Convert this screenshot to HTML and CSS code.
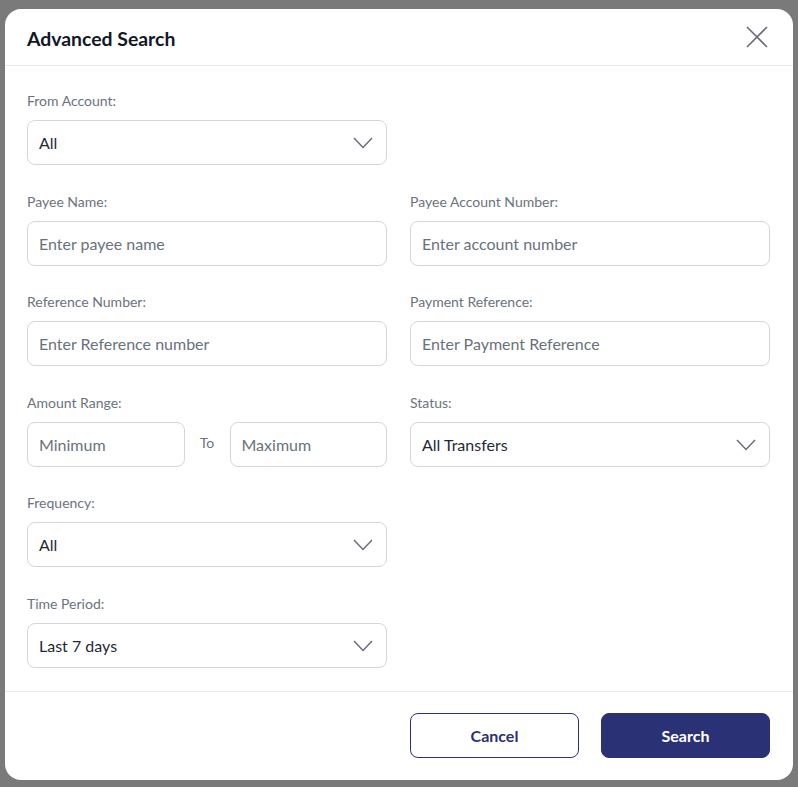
FILE: index.html
```html
<!DOCTYPE html>
<html lang="en">
<head>
    <meta charset="UTF-8">
    <meta name="viewport" content="width=device-width, initial-scale=1.0">
    <title>Advanced Search</title>
    <link rel="stylesheet" href="styles.css">
</head>
<body>
    <div class="backdrop">
        <div class="modal">
            <header class="modal-header">
                <h2>Advanced Search</h2>
                <button class="close-btn" type="button" aria-label="Close">
                    <svg width="22" height="22" viewBox="0 0 22 22">
                        <path d="M1 1 L21 21 M21 1 L1 21" stroke="#6b6b7e" stroke-width="1.6" fill="none"/>
                    </svg>
                </button>
            </header>

            <form class="modal-body">
                <div class="field">
                    <label>From Account:</label>
                    <div class="select-wrap">
                        <select class="control"><option>All</option></select>
                        <svg class="chevron" width="20" height="12" viewBox="0 0 20 12"><path d="M1 1 L10 10.5 L19 1" stroke="#6b6b7e" stroke-width="1.5" fill="none"/></svg>
                    </div>
                </div>
                <div class="field"></div>

                <div class="field">
                    <label>Payee Name:</label>
                    <input class="control" type="text" placeholder="Enter payee name">
                </div>
                <div class="field">
                    <label>Payee Account Number:</label>
                    <input class="control" type="text" placeholder="Enter account number">
                </div>

                <div class="field">
                    <label>Reference Number:</label>
                    <input class="control" type="text" placeholder="Enter Reference number">
                </div>
                <div class="field">
                    <label>Payment Reference:</label>
                    <input class="control" type="text" placeholder="Enter Payment Reference">
                </div>

                <div class="field">
                    <label>Amount Range:</label>
                    <div class="range">
                        <input class="control" type="text" placeholder="Minimum">
                        <span class="range-to">To</span>
                        <input class="control" type="text" placeholder="Maximum">
                    </div>
                </div>
                <div class="field">
                    <label>Status:</label>
                    <div class="select-wrap">
                        <select class="control"><option>All Transfers</option></select>
                        <svg class="chevron" width="20" height="12" viewBox="0 0 20 12"><path d="M1 1 L10 10.5 L19 1" stroke="#6b6b7e" stroke-width="1.5" fill="none"/></svg>
                    </div>
                </div>

                <div class="field">
                    <label>Frequency:</label>
                    <div class="select-wrap">
                        <select class="control"><option>All</option></select>
                        <svg class="chevron" width="20" height="12" viewBox="0 0 20 12"><path d="M1 1 L10 10.5 L19 1" stroke="#6b6b7e" stroke-width="1.5" fill="none"/></svg>
                    </div>
                </div>
                <div class="field"></div>

                <div class="field">
                    <label>Time Period:</label>
                    <div class="select-wrap">
                        <select class="control"><option>Last 7 days</option></select>
                        <svg class="chevron" width="20" height="12" viewBox="0 0 20 12"><path d="M1 1 L10 10.5 L19 1" stroke="#6b6b7e" stroke-width="1.5" fill="none"/></svg>
                    </div>
                </div>
                <div class="field"></div>
            </form>

            <footer class="modal-footer">
                <button class="btn btn-outline" type="button">Cancel</button>
                <button class="btn btn-primary" type="button">Search</button>
            </footer>
        </div>
    </div>
</body>
</html>
```

FILE: styles.css
```css
body {
    margin: 0;
    padding: 0;
    font-family: Lato, "Liberation Sans", sans-serif;
    background-color: #7a7a7a;
}
.backdrop {
    height: 787px;
    padding: 9px 5px 0 5px;
    box-sizing: border-box;
}
.modal {
    width: 788px;
    height: 771px;
    background-color: #ffffff;
    border-radius: 16px;
    display: flex;
    flex-direction: column;
    overflow: hidden;
}
.modal-header {
    height: 57px;
    box-sizing: border-box;
    padding: 3px 25px 0 22px;
    display: flex;
    align-items: center;
    justify-content: space-between;
    border-bottom: 1px solid #e4e9f0;
}
.modal-header h2 {
    margin: 0;
    font-size: 19.4px;
    font-weight: 700;
    color: #111827;
}
.close-btn {
    background: none;
    border: none;
    padding: 0;
    width: 22px;
    height: 22px;
    cursor: pointer;
    margin-top: -4px;
}
.close-btn svg {
    display: block;
}
.modal-body {
    flex: 1;
    margin: 0;
    padding: 25px 23px 0 22px;
    display: grid;
    grid-template-columns: 360px 360px;
    column-gap: 23px;
    row-gap: 26.5px;
    align-content: start;
}
.field {
    display: flex;
    flex-direction: column;
    min-height: 74px;
}
.field label {
    font-size: 14px;
    line-height: 20px;
    color: #6b7280;
    margin-bottom: 9px;
}
.control {
    height: 45px;
    width: 100%;
    box-sizing: border-box;
    border: 1px solid #d4d6dc;
    border-radius: 8px;
    padding: 0 11px;
    font-family: Lato, "Liberation Sans", sans-serif;
    font-size: 16px;
    color: #1f2937;
    background-color: #ffffff;
    outline: none;
}
.control::placeholder {
    color: #69727c;
}
select.control {
    appearance: none;
    -webkit-appearance: none;
    padding-right: 40px;
}
.select-wrap {
    position: relative;
}
.chevron {
    position: absolute;
    right: 14px;
    top: 17px;
    pointer-events: none;
}
.range {
    display: flex;
    align-items: center;
    gap: 14px;
}
.range .control {
    flex: 1;
    min-width: 0;
}
.range-to {
    font-size: 14px;
    color: #6b7280;
    width: 17px;
    text-align: center;
    margin-top: -4px;
}
.modal-footer {
    border-top: 1px solid #e4e9f0;
    padding: 21px 23px 22px 0;
    display: flex;
    justify-content: flex-end;
    gap: 22px;
}
.btn {
    width: 169px;
    height: 45px;
    border-radius: 8px;
    font-family: Lato, "Liberation Sans", sans-serif;
    font-size: 16px;
    font-weight: 700;
    cursor: pointer;
}
.btn-outline {
    background-color: #ffffff;
    border: 1px solid #2b3177;
    color: #2b3177;
}
.btn-primary {
    background-color: #2b3175;
    border: 1px solid #2b3175;
    color: #ffffff;
}
```
